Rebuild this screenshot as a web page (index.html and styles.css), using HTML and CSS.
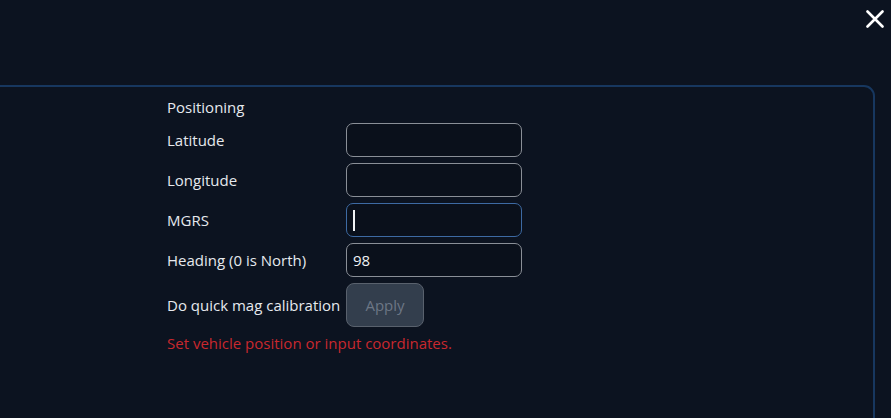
FILE: index.html
```html
<!DOCTYPE html>
<html>
<head>
<meta charset="utf-8">
<link rel="stylesheet" href="styles.css">
</head>
<body>
<div class="topbar">
  <button class="close" aria-label="Close">
    <svg width="18" height="18" viewBox="0 0 18 18"><path d="M1.5 1.5 L16.5 16.5 M16.5 1.5 L1.5 16.5" stroke="#ffffff" stroke-width="2.6" stroke-linecap="round"/></svg>
  </button>
</div>
<div class="panel">
  <div class="form">
    <div class="title">Positioning</div>
    <div class="row"><label class="label">Latitude</label><input class="field" type="text"></div>
    <div class="row"><label class="label">Longitude</label><input class="field" type="text"></div>
    <div class="row"><label class="label">MGRS</label><div class="field focus"><span class="caret"></span></div></div>
    <div class="row"><label class="label">Heading (0 is North)</label><input class="field" type="text" value="98"></div>
    <div class="row btnrow"><label class="label">Do quick mag calibration</label><button class="apply" disabled>Apply</button></div>
    <div class="error">Set vehicle position or input coordinates.</div>
  </div>
</div>
</body>
</html>
```
FILE: styles.css
```css
html, body {
  margin: 0;
  padding: 0;
  background: #0c1320;
  height: 100%;
  overflow: hidden;
}
body {
  font-family: "Open Sans", sans-serif;
  font-size: 15px;
  color: #e6e9ee;
}
.topbar {
  height: 85px;
  display: flex;
  justify-content: flex-end;
  align-items: flex-start;
  box-sizing: border-box;
  padding: 10px 7px 0 0;
}
.close {
  background: none;
  border: none;
  padding: 0;
  width: 18px;
  height: 18px;
  cursor: pointer;
  display: block;
}
.close svg { display: block; }
.panel {
  margin-left: -30px;
  margin-right: 16px;
  height: 360px;
  border: 2px solid #17375f;
  border-radius: 11px;
  box-sizing: border-box;
  padding: 11px 0 0 195px;
}
.form {
  display: flex;
  flex-direction: column;
  gap: 6px;
}
.title {
  line-height: 19px;
  height: 19px;
}
.row {
  display: grid;
  grid-template-columns: 179px 176px;
  align-items: center;
  height: 34px;
}
.label {
  line-height: 20px;
}
.field {
  box-sizing: border-box;
  width: 176px;
  height: 34px;
  background: #0a101b;
  border: 1.5px solid #8a8f97;
  border-radius: 7px;
  color: #f0f2f5;
  font-family: "Open Sans", sans-serif;
  font-size: 15px;
  padding: 0 6px;
  outline: none;
  margin: 0;
}
.field.focus {
  border-color: #3d6aa3;
  display: flex;
  align-items: center;
}
.caret {
  display: block;
  width: 1.5px;
  height: 21px;
  background: #f0f2f5;
}
.btnrow {
  height: 44px;
}
.apply {
  box-sizing: border-box;
  width: 78px;
  height: 44px;
  background: #333e4d;
  border: 1.5px solid #59616d;
  border-radius: 8px;
  color: #6c7685;
  font-family: "Open Sans", sans-serif;
  font-size: 15px;
  padding: 0;
}
.error {
  color: #c8282e;
  line-height: 20px;
}
```
